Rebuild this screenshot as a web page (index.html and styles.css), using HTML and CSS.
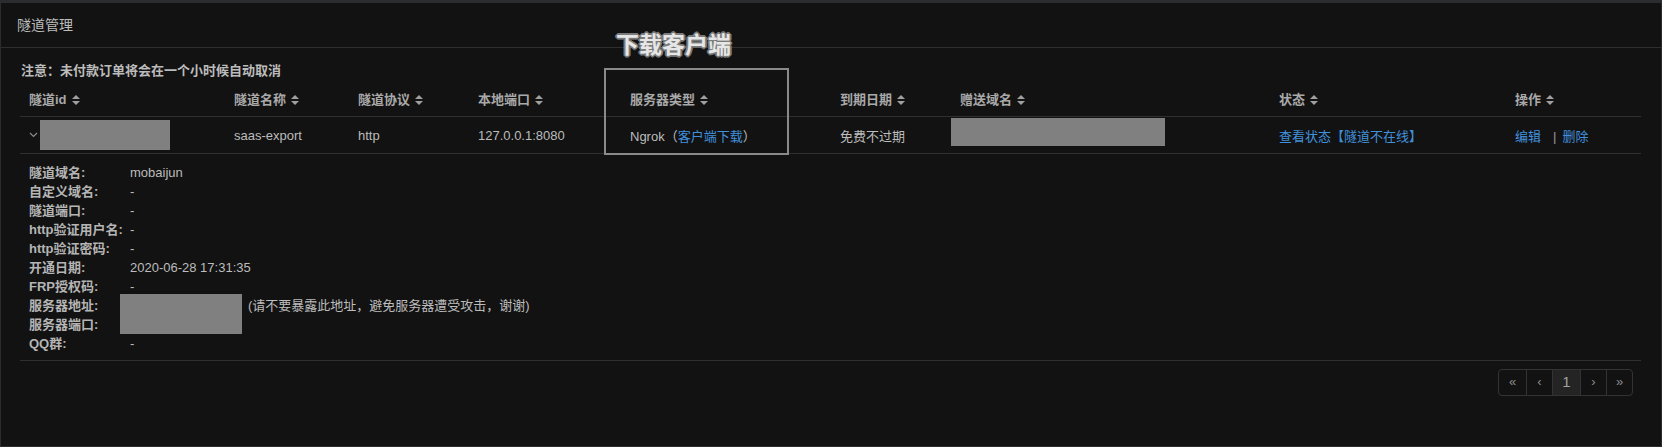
FILE: index.html
```html
<!DOCTYPE html>
<html lang="zh-CN">
<head>
<meta charset="utf-8">
<title>隧道管理</title>
<link rel="stylesheet" href="styles.css">
</head>
<body>
<div class="topbar"></div>
<div class="panel">
  <div class="panel-head">隧道管理</div>
  <div class="panel-body">
    <div class="notice">注意：未付款订单将会在一个小时候自动取消</div>
    <table class="grid">
      <colgroup>
        <col class="c1"><col class="c2"><col class="c3"><col class="c4"><col class="c5"><col class="c6"><col class="c7"><col class="c8"><col class="c9">
      </colgroup>
      <thead>
        <tr>
          <th>隧道id<svg class="sort" width="8" height="10" viewBox="0 0 8 10"><path d="M0 4L4 0L8 4Z M0 6L4 10L8 6Z"/></svg></th>
          <th>隧道名称<svg class="sort" width="8" height="10" viewBox="0 0 8 10"><path d="M0 4L4 0L8 4Z M0 6L4 10L8 6Z"/></svg></th>
          <th>隧道协议<svg class="sort" width="8" height="10" viewBox="0 0 8 10"><path d="M0 4L4 0L8 4Z M0 6L4 10L8 6Z"/></svg></th>
          <th>本地端口<svg class="sort" width="8" height="10" viewBox="0 0 8 10"><path d="M0 4L4 0L8 4Z M0 6L4 10L8 6Z"/></svg></th>
          <th>服务器类型<svg class="sort" width="8" height="10" viewBox="0 0 8 10"><path d="M0 4L4 0L8 4Z M0 6L4 10L8 6Z"/></svg></th>
          <th>到期日期<svg class="sort" width="8" height="10" viewBox="0 0 8 10"><path d="M0 4L4 0L8 4Z M0 6L4 10L8 6Z"/></svg></th>
          <th>赠送域名<svg class="sort" width="8" height="10" viewBox="0 0 8 10"><path d="M0 4L4 0L8 4Z M0 6L4 10L8 6Z"/></svg></th>
          <th>状态<svg class="sort" width="8" height="10" viewBox="0 0 8 10"><path d="M0 4L4 0L8 4Z M0 6L4 10L8 6Z"/></svg></th>
          <th>操作<svg class="sort" width="8" height="10" viewBox="0 0 8 10"><path d="M0 4L4 0L8 4Z M0 6L4 10L8 6Z"/></svg></th>
        </tr>
      </thead>
      <tbody>
        <tr>
          <td class="id-cell"><svg class="chev" width="9" height="6" viewBox="0 0 9 6"><path d="M1 1l3.5 3.5L8 1" fill="none" stroke="#8a8a8a" stroke-width="1.2"/></svg><span class="redact-id"></span></td>
          <td>saas-export</td>
          <td>http</td>
          <td>127.0.0.1:8080</td>
          <td>Ngrok<span class="paren">（</span><a class="link" href="#">客户端下载</a><span class="paren">）</span></td>
          <td>免费不过期</td>
          <td class="domain-cell"><span class="redact-domain"></span></td>
          <td><a class="link" href="#">查看状态【隧道不在线】</a></td>
          <td><a class="link" href="#">编辑</a><span class="sep">|</span><a class="link" href="#">删除</a></td>
        </tr>
      </tbody>
    </table>
    <div class="details">
      <div class="lbl">隧道域名:</div><div class="val">mobaijun</div>
      <div class="lbl">自定义域名:</div><div class="val">-</div>
      <div class="lbl">隧道端口:</div><div class="val">-</div>
      <div class="lbl">http验证用户名:</div><div class="val">-</div>
      <div class="lbl">http验证密码:</div><div class="val">-</div>
      <div class="lbl">开通日期:</div><div class="val">2020-06-28 17:31:35</div>
      <div class="lbl">FRP授权码:</div><div class="val">-</div>
      <div class="lbl">服务器地址:</div><div class="val addr"><span class="redact-addr"></span><span class="addr-note">(请不要暴露此地址，避免服务器遭受攻击，谢谢)</span></div>
      <div class="lbl">服务器端口:</div><div class="val"></div>
      <div class="lbl">QQ群:</div><div class="val">-</div>
    </div>
    <div class="foot">
      <div class="pager">
        <span class="pg">«</span><span class="pg">‹</span><span class="pg active">1</span><span class="pg">›</span><span class="pg">»</span>
      </div>
    </div>
  </div>
  <div class="callout-box"></div>
  <div class="callout-text">下载客户端</div>
</div>
</body>
</html>
```

FILE: styles.css
```css
html, body {
  margin: 0;
  padding: 0;
  background: #121212;
}
body {
  font-family: "Liberation Sans", "Noto Sans CJK SC", sans-serif;
  font-size: 13px;
  color: #bcbcbc;
  width: 1662px;
  height: 447px;
  overflow: hidden;
}
.topbar {
  height: 3px;
  background: #2b2c2e;
}
.panel {
  position: relative;
  box-sizing: border-box;
  height: 444px;
  border: 1px solid #2c2c2c;
  border-top: none;
  background: #121212;
}
.panel-head {
  height: 44px;
  line-height: 44px;
  padding-left: 16px;
  font-size: 14px;
  color: #bdbdbd;
  border-bottom: 1px solid #2e2e2e;
}
.panel-body {
  padding: 13px 20px 0 19px;
}
.notice {
  line-height: 20px;
  font-weight: bold;
  color: #bcbcbc;
  padding-left: 1px;
}
.grid {
  width: 1621px;
  border-collapse: collapse;
  table-layout: fixed;
}
.c1 { width: 205px; }
.c2 { width: 124px; }
.c3 { width: 120px; }
.c4 { width: 152px; }
.c5 { width: 210px; }
.c6 { width: 120px; }
.c7 { width: 319px; }
.c8 { width: 236px; }
.c9 { width: 135px; }
.grid th {
  text-align: left;
  font-weight: bold;
  color: #a9a9a9;
  height: 35px;
  padding: 0 0 0 9px;
  border-bottom: 1px solid #2f2f2f;
  vertical-align: middle;
  white-space: nowrap;
}
.grid td {
  height: 36px;
  padding: 0 0 0 9px;
  border-bottom: 1px solid #2f2f2f;
  vertical-align: middle;
  color: #bcbcbc;
  white-space: nowrap;
}
.sort {
  display: inline-block;
  margin-left: 5px;
  vertical-align: -1px;
  fill: #a0a0a0;
}
.chev {
  display: inline-block;
  vertical-align: middle;
  margin-right: 2px;
}
.redact-id {
  display: inline-block;
  width: 130px;
  height: 30px;
  background: #808080;
  vertical-align: middle;
}
.domain-cell {
  padding-left: 0 !important;
}
.redact-domain {
  display: inline-block;
  width: 214px;
  height: 28px;
  background: #808080;
  vertical-align: middle;
  margin-top: -7px;
}
.link {
  color: #4190dc;
  text-decoration: none;
}
.paren {
  color: #bcbcbc;
}
.sep {
  color: #9a9a9a;
  margin: 0 6px 0 12px;
}
.details {
  display: grid;
  grid-template-columns: 101px 1fr;
  grid-auto-rows: 19px;
  padding: 9px 0 7px 9px;
  line-height: 19px;
  border-bottom: 1px solid #2f2f2f;
}
.lbl {
  font-weight: bold;
  color: #b5b5b5;
  white-space: nowrap;
}
.val {
  color: #bcbcbc;
  white-space: nowrap;
}
.addr {
  position: relative;
}
.redact-addr {
  position: absolute;
  left: -10px;
  top: -2px;
  width: 122px;
  height: 40px;
  background: #808080;
}
.addr-note {
  padding-left: 118px;
}
.foot {
  display: flex;
  justify-content: flex-end;
  padding: 8px 8px 0 0;
}
.pager {
  display: flex;
  border: 1px solid #333;
  border-radius: 4px;
  overflow: hidden;
}
.pg {
  height: 25px;
  line-height: 24px;
  text-align: center;
  color: #8c8c8c;
  border-left: 1px solid #333;
  width: 25px;
  font-size: 13px;
}
.pg:first-child { border-left: none; width: 27px; }
.pg.active {
  background: #242424;
  color: #a0a0a0;
  font-size: 15px;
  width: 27px;
}
.callout-box {
  position: absolute;
  left: 603px;
  top: 65px;
  width: 181px;
  height: 83px;
  border: 2px solid #8a8a8a;
}
.callout-text {
  position: absolute;
  left: 615px;
  top: 29px;
  font-size: 23px;
  line-height: 27px;
  font-weight: bold;
  color: #e6e6e6;
  text-shadow:
    -1px -1px 0 #7a7a7a, 1px -1px 0 #7a7a7a, -1px 1px 0 #7a7a7a, 1px 1px 0 #7a7a7a,
    0 2px 0 #6a6a6a, 2px 0 0 #7a7a7a, -2px 0 0 #7a7a7a, 0 -2px 0 #7a7a7a;
}
```
